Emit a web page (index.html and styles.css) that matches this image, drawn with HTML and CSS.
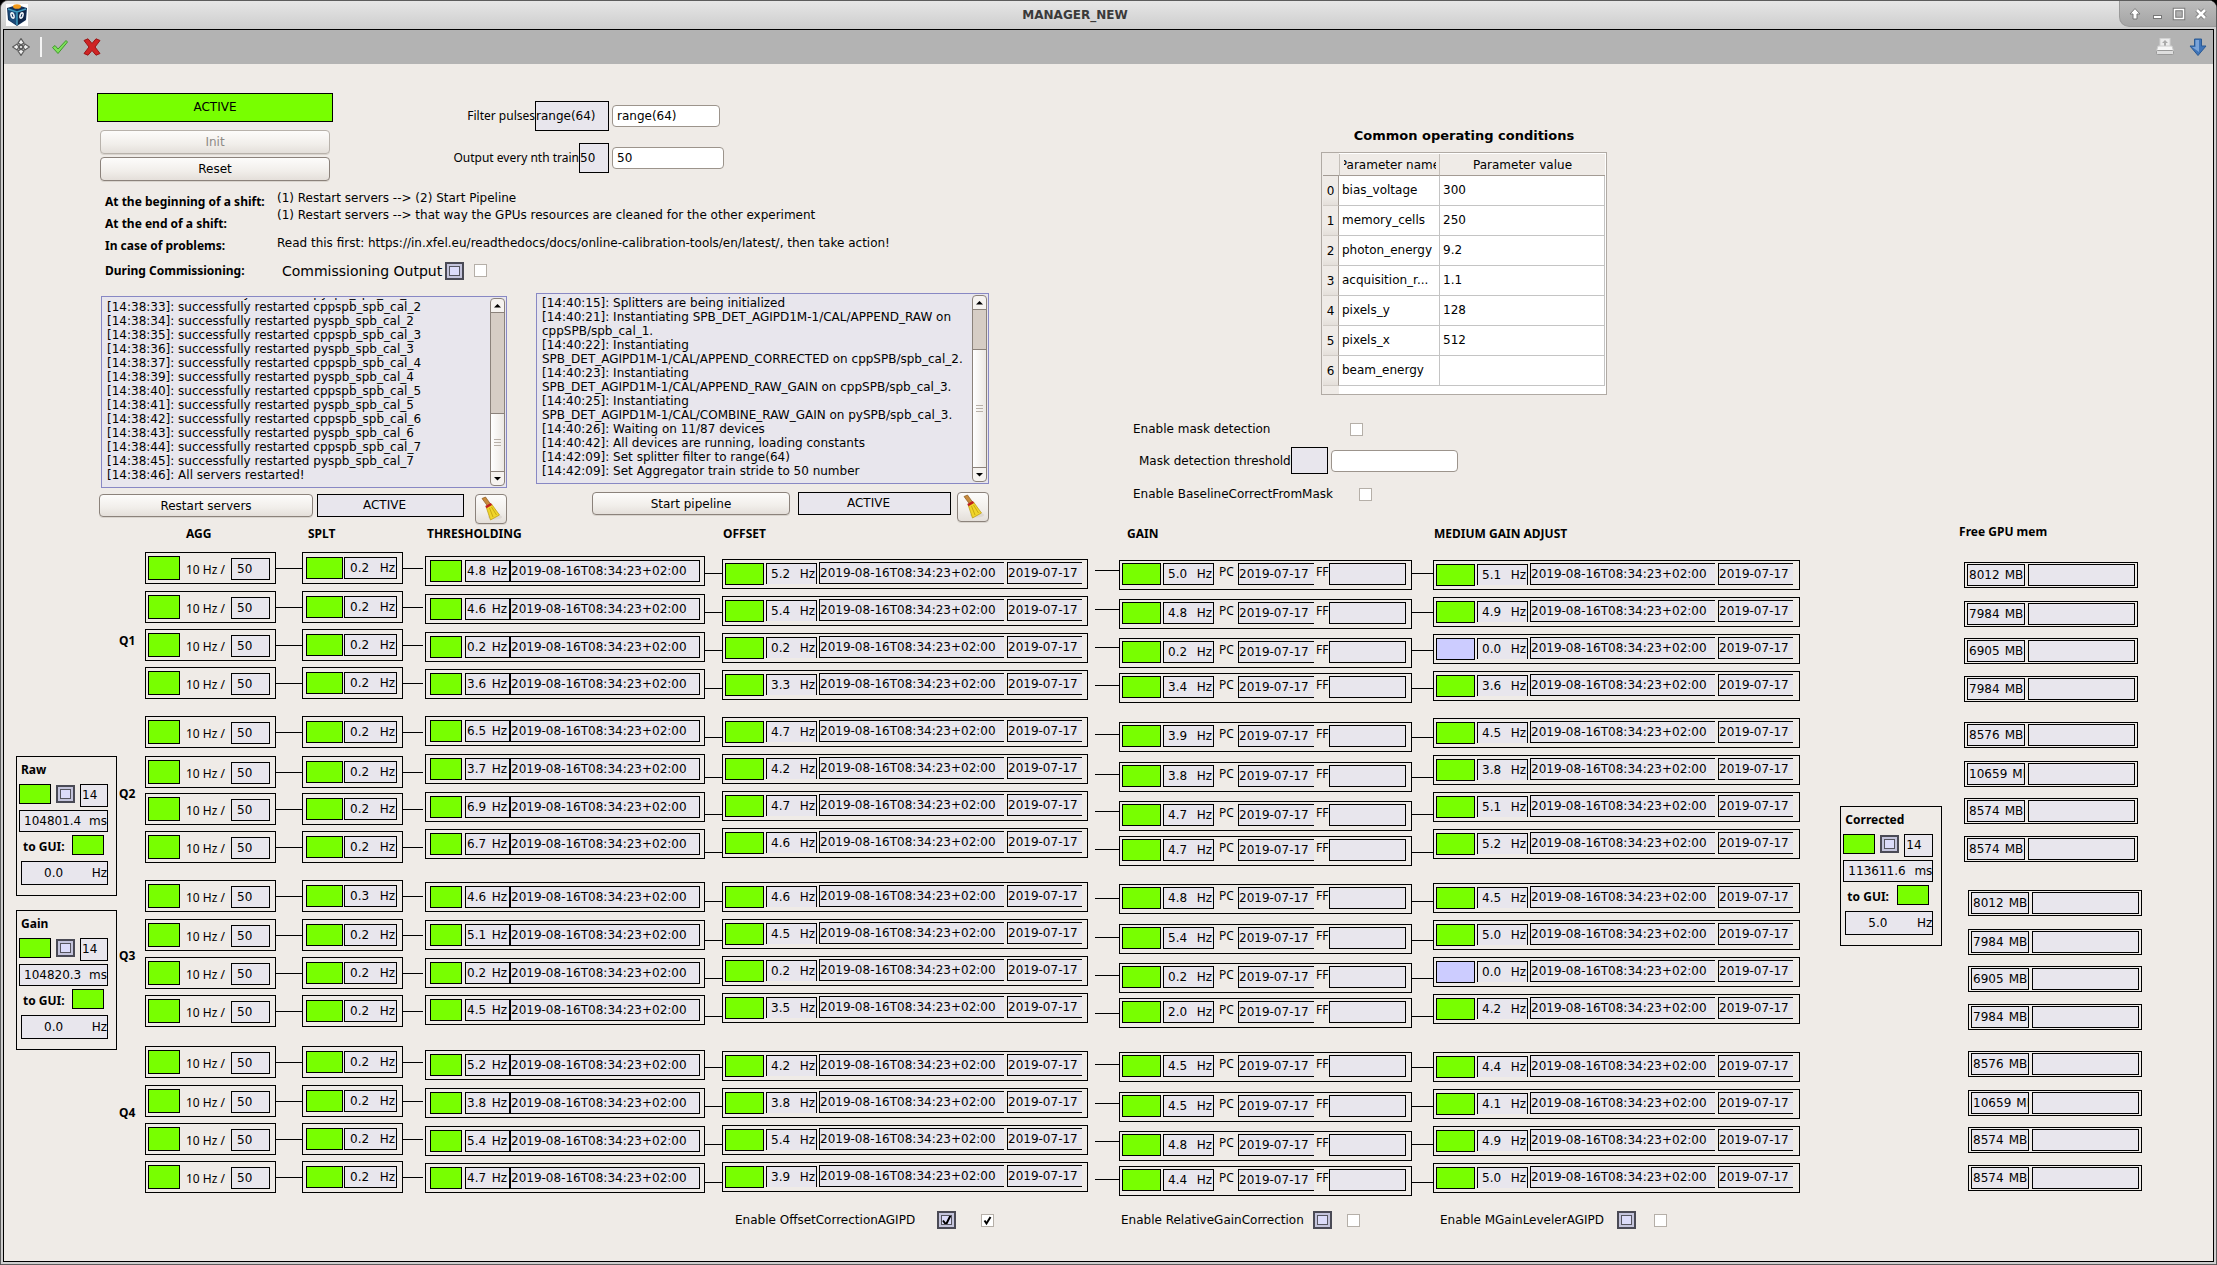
FILE: index.html
```html
<!DOCTYPE html>
<html lang="en">
<head>
<meta charset="utf-8">
<title>MANAGER_NEW</title>
<link rel="stylesheet" href="styles.css">
</head>
<body>
<div class="window">
  <header class="titlebar">
    <svg class="app-icon" width="22" height="22" viewBox="0 0 22 22" aria-hidden="true">
      <rect width="22" height="22" fill="#fff"/>
      <path d="M1 4 11 1l10 3-1 12-9 6-9-6z" fill="#12325a"/>
      <path d="M2 5l9 3v13l-8-5z" fill="#1c4a78"/>
      <path d="M20 5l-9 3v13l8-5z" fill="#0f2547"/>
      <path d="M2 5l9 3 9-3M11 8v13" fill="none" stroke="#3f9cc0" stroke-width="1.5"/>
      <ellipse cx="6.500" cy="11.500" rx="2.200" ry="3.600" fill="#e8eef4" transform="rotate(-15 6.500 11.500)"/>
      <ellipse cx="15.500" cy="11.500" rx="2.200" ry="3.600" fill="#e8eef4" transform="rotate(15 15.500 11.500)"/>
      <path d="M6 10l1 3M16 10l-1 3" stroke="#12325a"/>
      <ellipse cx="11" cy="2.500" rx="4" ry="2.300" fill="#f29a1c"/>
    </svg>
    <h1 class="title">MANAGER_NEW</h1>
    <div class="window-buttons">
      <button type="button" aria-label="Shade"><svg width="14" height="14" viewBox="0 0 14 14"><path d="M7 1.500 12 7H9v5H5V7H2z" fill="#fff" stroke="#777"/></svg></button>
      <button type="button" aria-label="Minimize"><svg width="14" height="14" viewBox="0 0 14 14"><rect x="3.500" y="8.500" width="8" height="3" fill="#fff" stroke="#777"/></svg></button>
      <button type="button" aria-label="Maximize"><svg width="14" height="14" viewBox="0 0 14 14"><path d="M2.500 2.500h9v9h-9z" fill="none" stroke="#777" stroke-width="3.500"/><path d="M2.500 2.500h9v9h-9z" fill="none" stroke="#fff" stroke-width="1.500"/></svg></button>
      <button type="button" aria-label="Close"><svg width="14" height="14" viewBox="0 0 14 14"><path d="M3 3l8 8M11 3l-8 8" stroke="#777" stroke-width="4.500"/><path d="M3 3l8 8M11 3l-8 8" stroke="#fff" stroke-width="2.600"/></svg></button>
    </div>
  </header>
  <div class="frame">
    <nav class="toolbar">
      <button type="button" aria-label="Move"><svg width="18" height="18" viewBox="0 0 18 18"><g fill="#f0f0f0" stroke="#5c5c5c" stroke-width="1.200"><path d="M9 .6 12 5 9 6.800 6 5z"/><path d="M9 17.400 12 13 9 11.200 6 13z"/><path d="M.6 9 5 6 6.800 9 5 12z"/><path d="M17.400 9 13 6 11.200 9 13 12z"/><rect x="7.500" y="7.500" width="3" height="3"/></g></svg></button>
      <span class="separator"></span>
      <button type="button" aria-label="Apply all"><svg width="18" height="16" viewBox="0 0 18 16"><path d="M1.500 8.500 4 6.500 7 10 15 1.500 16.500 3 7 14.500z" fill="#7fe05a" stroke="#3f9a2a"/></svg></button>
      <button type="button" class="discard" aria-label="Discard all"><svg width="18" height="18" viewBox="0 0 18 18"><path d="M1 2.500 5 .8 9 5.500 13 .8 17 2.500 12 9l5 6.500-4 1.700-4-4.700-4 4.700-4-1.700L6 9z" fill="#cf2424" stroke="#9c1414"/></svg></button>
      <button type="button" class="push" aria-label="Print"><svg width="18" height="18" viewBox="0 0 18 18"><rect x="4" y=".5" width="10" height="9" fill="#ececec" stroke="#d2d2d2"/><path d="M9 2l3 3h-2v3H8V5H6z" fill="#aaa"/><path d="M2 8h14l1.500 5H.5z" fill="#f6f6f6" stroke="#ccc"/><rect x=".5" y="12.500" width="17" height="4" rx="1" fill="#dedede" stroke="#999"/></svg></button>
      <button type="button" aria-label="Download"><svg width="18" height="18" viewBox="0 0 18 18"><path d="M5.500 1h7v7H17l-8 9.500L1 8h4.500z" fill="#3f74b8" stroke="#2b5a94"/><path d="M6.500 2H10v12L3 9h3.500z" fill="#7ba4d8"/></svg></button>
    </nav>
    <main class="scene">
      <section class="top">
        <div class="operate">
          <div class="controls">
            <div class="state-stack">
              <div class="readout state on">ACTIVE</div>
              <button type="button" class="btn" disabled>Init</button>
              <button type="button" class="btn">Reset</button>
            </div>
            <div class="filters">
              <div class="filter">
                <label class="note" for="pulses">Filter pulses</label>
                <div class="readout value-wide">range(64)</div>
                <input id="pulses" class="field" type="text" value="range(64)">
              </div>
              <div class="filter">
                <label class="note" for="stride">Output every nth train</label>
                <div class="readout value-slim">50</div>
                <input id="stride" class="field long" type="text" value="50">
              </div>
            </div>
          </div>
          <div class="guide">
            <div class="guide-labels">
              <p>At the beginning of a shift:</p>
              <p>At the end of a shift:</p>
              <p>In case of problems:</p>
            </div>
            <div class="guide-texts">
              <p>(1) Restart servers --&gt; (2) Start Pipeline</p>
              <p>(1) Restart servers --&gt; that way the GPUs resources are cleaned for the other experiment</p>
              <p class="problems">Read this first: https://in.xfel.eu/readthedocs/docs/online-calibration-tools/en/latest/, then take action!</p>
            </div>
          </div>
          <div class="commissioning">
            <span class="caption">During Commissioning:</span>
            <label class="big" for="comm">Commissioning Output</label>
            <input type="checkbox" class="lamp" disabled aria-label="Commissioning Output state">
            <input type="checkbox" class="tick" id="comm">
          </div>
          <div class="consoles">
            <div class="console servers">
              <div class="log">
                <div class="log-text">[14:38:31]: successfully restarted pyspb_spb_cal_1
[14:38:33]: successfully restarted cppspb_spb_cal_2
[14:38:34]: successfully restarted pyspb_spb_cal_2
[14:38:35]: successfully restarted cppspb_spb_cal_3
[14:38:36]: successfully restarted pyspb_spb_cal_3
[14:38:37]: successfully restarted cppspb_spb_cal_4
[14:38:39]: successfully restarted pyspb_spb_cal_4
[14:38:40]: successfully restarted cppspb_spb_cal_5
[14:38:41]: successfully restarted pyspb_spb_cal_5
[14:38:42]: successfully restarted cppspb_spb_cal_6
[14:38:43]: successfully restarted pyspb_spb_cal_6
[14:38:44]: successfully restarted cppspb_spb_cal_7
[14:38:45]: successfully restarted pyspb_spb_cal_7
[14:38:46]: All servers restarted!</div>
                <div class="scroll">
                  <svg class="arrow" viewBox="0 0 13 13" aria-hidden="true"><path d="M3 8.500h7L6.500 5z"/></svg>
                  <span class="trough"></span>
                  <span class="thumb"><i></i></span>
                  <svg class="arrow" viewBox="0 0 13 13" aria-hidden="true"><path d="M3 5h7L6.500 8.500z"/></svg>
                </div>
              </div>
              <div class="console-foot">
                <button type="button" class="btn">Restart servers</button>
                <div class="readout state">ACTIVE</div>
                <button type="button" class="btn broom" aria-label="Clear server log"><svg width="24" height="26" viewBox="0 0 24 26"><ellipse cx="16" cy="21" rx="7" ry="2.500" fill="#ddd8d2"/><path d="M3 2.500 6.500 1 11.500 8 8.500 10z" fill="#c98a3c" stroke="#8a5a1e" stroke-width=".7"/><path d="M7 10.500 12.500 8l8 11-9 5z" fill="#f0d52a" stroke="#b8960c" stroke-width=".7"/><path d="M10.500 12l3.500 9M12.500 11l5 8" stroke="#c9a812"/><path d="M6.300 10 11.800 7l1.300 2-5.600 3.200z" fill="#c02020"/></svg></button>
              </div>
            </div>
            <div class="console pipeline-log">
              <div class="log">
                <div class="log-text">[14:40:15]: Splitters are being initialized
[14:40:21]: Instantiating SPB_DET_AGIPD1M-1/CAL/APPEND_RAW on
cppSPB/spb_cal_1.
[14:40:22]: Instantiating
SPB_DET_AGIPD1M-1/CAL/APPEND_CORRECTED on cppSPB/spb_cal_2.
[14:40:23]: Instantiating
SPB_DET_AGIPD1M-1/CAL/APPEND_RAW_GAIN on cppSPB/spb_cal_3.
[14:40:25]: Instantiating
SPB_DET_AGIPD1M-1/CAL/COMBINE_RAW_GAIN on pySPB/spb_cal_3.
[14:40:26]: Waiting on 11/87 devices
[14:40:42]: All devices are running, loading constants
[14:42:09]: Set splitter filter to range(64)
[14:42:09]: Set Aggregator train stride to 50 number</div>
                <div class="scroll">
                  <svg class="arrow" viewBox="0 0 13 13" aria-hidden="true"><path d="M3 8.500h7L6.500 5z"/></svg>
                  <span class="trough"></span>
                  <span class="thumb"><i></i></span>
                  <svg class="arrow" viewBox="0 0 13 13" aria-hidden="true"><path d="M3 5h7L6.500 8.500z"/></svg>
                </div>
              </div>
              <div class="console-foot">
                <button type="button" class="btn">Start pipeline</button>
                <div class="readout state">ACTIVE</div>
                <button type="button" class="btn broom" aria-label="Clear pipeline log"><svg width="24" height="26" viewBox="0 0 24 26"><ellipse cx="16" cy="21" rx="7" ry="2.500" fill="#ddd8d2"/><path d="M3 2.500 6.500 1 11.500 8 8.500 10z" fill="#c98a3c" stroke="#8a5a1e" stroke-width=".7"/><path d="M7 10.500 12.500 8l8 11-9 5z" fill="#f0d52a" stroke="#b8960c" stroke-width=".7"/><path d="M10.500 12l3.500 9M12.500 11l5 8" stroke="#c9a812"/><path d="M6.300 10 11.800 7l1.300 2-5.600 3.200z" fill="#c02020"/></svg></button>
              </div>
            </div>
          </div>
        </div>
        <div class="conditions">
          <div class="table-block">
            <h2>Common operating conditions</h2>
            <div class="table-frame">
              <table>
                <thead><tr><th class="idx"></th><th class="name"><span>Parameter name</span></th><th class="val">Parameter value</th></tr></thead>
                <tbody>
                  <tr><th>0</th><td>bias_voltage</td><td>300</td></tr>
                  <tr><th>1</th><td>memory_cells</td><td>250</td></tr>
                  <tr><th>2</th><td>photon_energy</td><td>9.2</td></tr>
                  <tr><th>3</th><td>acquisition_r...</td><td>1.1</td></tr>
                  <tr><th>4</th><td>pixels_y</td><td>128</td></tr>
                  <tr><th>5</th><td>pixels_x</td><td>512</td></tr>
                  <tr><th>6</th><td>beam_energy</td><td></td></tr>
                </tbody>
              </table>
            </div>
          </div>
          <div class="mask-row detection"><label for="mask">Enable mask detection</label><input type="checkbox" class="tick" id="mask"></div>
          <div class="mask-row threshold"><label for="maskth">Mask detection threshold</label><div class="readout"></div><input id="maskth" class="field" type="text"></div>
          <div class="mask-row baseline"><label for="base">Enable BaselineCorrectFromMask</label><input type="checkbox" class="tick" id="base"></div>
        </div>
      </section>

      <section class="pipeline">
        <div class="sources">
          <article class="bridge">
            <h3>Raw</h3>
            <div class="bridge-line"><span class="led"></span><input type="checkbox" class="lamp" disabled aria-label="Raw state"><div class="readout count">14</div></div>
            <div class="readout pair"><span>104801.4</span><span>ms</span></div>
            <div class="gui-line"><b>to GUI:</b><span class="led"></span></div>
            <div class="readout pair rate"><span>0.0</span><span>Hz</span></div>
          </article>
          <article class="bridge">
            <h3>Gain</h3>
            <div class="bridge-line"><span class="led"></span><input type="checkbox" class="lamp" disabled aria-label="Gain state"><div class="readout count">14</div></div>
            <div class="readout pair"><span>104820.3</span><span>ms</span></div>
            <div class="gui-line"><b>to GUI:</b><span class="led"></span></div>
            <div class="readout pair rate"><span>0.0</span><span>Hz</span></div>
          </article>
        </div>
        <div class="quadrants"><b>Q1</b><b>Q2</b><b>Q3</b><b>Q4</b></div>
        <div class="lane agg"><h2>AGG</h2><div class="cells" data-lane="agg"></div></div>
        <div class="wires w1" data-lane="wire"></div>
        <div class="lane splt"><h2>SPLT</h2><div class="cells" data-lane="splt"></div></div>
        <div class="wires w2" data-lane="wire"></div>
        <div class="lane thr"><h2>THRESHOLDING</h2><div class="cells" data-lane="thr"></div></div>
        <div class="wires w3" data-lane="wire"></div>
        <div class="lane off"><h2>OFFSET</h2><div class="cells" data-lane="off"></div></div>
        <div class="wires w4" data-lane="wire"></div>
        <div class="lane gain"><h2>GAIN</h2><div class="cells" data-lane="gain"></div></div>
        <div class="wires w5" data-lane="wire"></div>
        <div class="lane off mga"><h2>MEDIUM GAIN ADJUST</h2><div class="cells" data-lane="mga"></div></div>
        <article class="bridge corrected">
          <h3>Corrected</h3>
          <div class="bridge-line"><span class="led"></span><input type="checkbox" class="lamp" disabled aria-label="Corrected state"><div class="readout count">14</div></div>
          <div class="readout pair"><span>113611.6</span><span>ms</span></div>
          <div class="gui-line"><b>to GUI:</b><span class="led"></span></div>
          <div class="readout pair rate"><span>5.0</span><span>Hz</span></div>
        </article>
        <div class="lane gpu"><h2>Free GPU mem</h2><div class="cells" data-lane="gpu"></div></div>
      </section>

      <footer class="switches">
        <div class="switch offset-switch"><label for="sw1">Enable OffsetCorrectionAGIPD</label><input type="checkbox" class="lamp" checked disabled aria-label="Offset correction state"><input type="checkbox" class="tick" id="sw1" checked></div>
        <div class="switch gain-switch"><label for="sw2">Enable RelativeGainCorrection</label><input type="checkbox" class="lamp" disabled aria-label="Relative gain state"><input type="checkbox" class="tick" id="sw2"></div>
        <div class="switch mga-switch"><label for="sw3">Enable MGainLevelerAGIPD</label><input type="checkbox" class="lamp" disabled aria-label="Leveler state"><input type="checkbox" class="tick" id="sw3"></div>
      </footer>
    </main>
  </div>
</div>
<script src="pipeline.js"></script>
</body>
</html>
```
FILE: pipeline.js
```js
// Rates and memory readings of the sixteen modules, top to bottom.
const rates = {
  splt: ["0.2","0.2","0.2","0.2","0.2","0.2","0.2","0.2","0.3","0.2","0.2","0.2","0.2","0.2","0.2","0.2"],
  thr: ["4.8","4.6","0.2","3.6","6.5","3.7","6.9","6.7","4.6","5.1","0.2","4.5","5.2","3.8","5.4","4.7"],
  off: ["5.2","5.4","0.2","3.3","4.7","4.2","4.7","4.6","4.6","4.5","0.2","3.5","4.2","3.8","5.4","3.9"],
  gain: ["5.0","4.8","0.2","3.4","3.9","3.8","4.7","4.7","4.8","5.4","0.2","2.0","4.5","4.5","4.8","4.4"],
  mga: ["5.1","4.9","0.0","3.6","4.5","3.8","5.1","5.2","4.5","5.0","0.0","4.2","4.4","4.1","4.9","5.0"],
  gpu: ["8012","7984","6905","7984","8576","10659","8574","8574","8012","7984","6905","7984","8576","10659","8574","8574"]
};
const STAMP = "2019-08-16T08:34:23+02:00";
const DAY = "2019-07-17";
const led = idle => `<span class="led${idle ? " idle" : ""}"></span>`;
const pair = (value, unit) => `<div class="readout pair"><span>${value}</span><span>${unit}</span></div>`;

const cell = {
  agg: () => `${led()}<span class="note">10 Hz /</span><div class="readout fifty">50</div>`,
  splt: v => led() + pair(v, "Hz"),
  thr: v => led() + pair(v, "Hz") + `<div class="readout stamp">${STAMP}</div>`,
  off: v => led() + pair(v, "Hz") + `<div class="readout stamp">${STAMP}</div><div class="readout day">${DAY}</div>`,
  mga: v => led(v === "0.0") + pair(v, "Hz") + `<div class="readout stamp">${STAMP}</div><div class="readout day">${DAY}</div>`,
  gain: v => led() + pair(v, "Hz") + `<span class="note pc">PC</span><div class="readout day">${DAY}</div><span class="note ff">FF</span><div class="readout flat"></div>`,
  gpu: v => pair(v, "MB") + `<div class="readout bar"></div>`
};

document.querySelectorAll("[data-lane]").forEach(host => {
  const lane = host.dataset.lane;
  for (let i = 0; i < 16; i++) {
    const item = document.createElement("div");
    if (lane === "wire") {
      item.className = "wire";
    } else {
      item.className = "cell";
      item.innerHTML = cell[lane](rates[lane] ? rates[lane][i] : "");
    }
    host.append(item);
  }
});
```
FILE: styles.css
```css
* { box-sizing: border-box; }
body {
  margin: 0;
  background: #000;
  color: #000;
  font: 12px/14px "DejaVu Sans", sans-serif;
}
p, h1, h2, h3 { margin: 0; font-size: 12px; }
button { font: inherit; color: inherit; }

/* Window chrome */
.window {
  display: flex;
  flex-direction: column;
  min-height: 100vh;
  padding: 0 2px 2px;
  border: 1px solid #5c5c5c;
  border-radius: 8px 8px 0 0;
  background: #cfcfcf;
}
.titlebar {
  display: flex;
  align-items: center;
  height: 28px;
  margin: 0 -2px;
  padding-left: 5px;
  border-radius: 7px 7px 0 0;
  background: linear-gradient(#e6e6e6, #cdcdcd);
}
.title {
  flex: 1;
  padding-left: 3px;
  text-align: center;
  line-height: 18px;
  color: #3a3a3a;
}
.window-buttons {
  display: flex;
  align-self: flex-start;
  gap: 8px;
  height: 26px;
  padding: 6px 8px 6px 8px;
  border: 1px solid #9a9a9a;
  border-width: 0 0 1px 1px;
  border-radius: 0 7px 0 10px;
  background: linear-gradient(#bdbdbd, #a4a4a4);
}
.window-buttons button, .toolbar button {
  display: grid;
  place-items: center;
  padding: 0;
  border: 0;
  background: none;
}
.window-buttons button { width: 14px; height: 14px; }
.frame {
  flex: 1;
  display: flex;
  flex-direction: column;
  border: 1px solid #000;
  background: #efebe7;
}
.toolbar {
  display: flex;
  align-items: center;
  height: 34px;
  padding: 0 6px 0 8px;
  background: #b3b3b3;
}
.separator { width: 2px; height: 20px; margin: 0 9px 0 10px; background: #f4f4f4; }
.discard { margin-left: 14px; }
.toolbar .push { margin: 0 15px 0 auto; }

/* Shared widgets */
.readout {
  border: 1px solid #000;
  background: #e8e6ed;
  white-space: nowrap;
  overflow: hidden;
}
.state { text-align: center; }
.led { background: #78ff00; border: 1px solid #000; flex: none; }
.on { background: #78ff00; }
.idle { background: #ccccff; }
.note, .caption, .guide-labels, .quadrants, .lane h2, .bridge h3, .gui-line b {
  font-family: "Noto Sans", sans-serif;
}
.btn {
  height: 24px;
  padding: 0;
  border: 1px solid #8b827b;
  border-radius: 4px;
  background: linear-gradient(#fdfcfb, #f1eeea 60%, #e4dfda);
  box-shadow: 0 1px 0 #d9d4ce;
}
.btn:disabled { color: #8e8a86; border-color: #b8b2ab; }
.field {
  height: 22px;
  padding: 0 4px;
  border: 1px solid #9c948c;
  border-radius: 4px;
  background: #fff;
  font: inherit;
}
.tick, .lamp { appearance: none; margin: 0; background: #fff; }
.tick { width: 13px; height: 13px; border: 1px solid #b5afa8; }
.tick:checked {
  background: #fff url("data:image/svg+xml,%3Csvg xmlns='http://www.w3.org/2000/svg' viewBox='0 0 11 11'%3E%3Cpath d='M2.500 5.500 4.500 8.500 8.500 2' fill='none' stroke='%23000' stroke-width='2'/%3E%3C/svg%3E") center / 11px no-repeat;
}
.lamp {
  width: 19px;
  height: 18px;
  border: 2px solid #4a4a55;
  background: #dcdcfa;
  box-shadow: inset 0 0 0 2px #c4c4dc, inset 0 0 0 3px #55555f;
}
.lamp:checked {
  background: #dcdcfa url("data:image/svg+xml,%3Csvg xmlns='http://www.w3.org/2000/svg' viewBox='0 0 15 14'%3E%3Cpath d='M4 7.500 7 11.500 12 1.500' fill='none' stroke='%23000' stroke-width='2'/%3E%3C/svg%3E") center / 15px 14px no-repeat;
}

/* Upper half */
.top { display: flex; height: max-content; }
.operate { width: 897px; margin-left: 93px; padding-top: 29px; }
.controls { display: flex; gap: 120px; }
.state-stack { display: flex; flex-direction: column; width: 236px; }
.state-stack .state { height: 29px; line-height: 26px; margin-bottom: 8px; }
.state-stack .btn { margin: 0 3px 3px; }
.filters { display: flex; flex-direction: column; gap: 12px; padding-top: 8px; }
.filter { display: grid; grid-template-columns: 1fr auto 115px; align-items: center; width: 271px; }
.filter .note { text-align: right; white-space: nowrap; }
.filter .readout { height: 30px; line-height: 28px; }
.value-wide { width: 74px; }
.value-slim { width: 30px; }
.filter .field { width: 108px; margin-left: 3px; }
.filter .long { width: 112px; }
.guide { display: flex; padding-left: 8px; margin-top: 6px; }
.guide-labels { width: 172px; padding-top: 1px; font-weight: bold; line-height: 22px; }
.guide-texts { line-height: 17px; white-space: nowrap; }
.problems { margin-top: 11px; }
.commissioning { display: flex; align-items: center; height: 27px; padding-left: 8px; }
.caption { width: 177px; font-weight: bold; }
.big { width: 163px; font-size: 14px; white-space: nowrap; }
.commissioning .tick { margin-left: 10px; }

.consoles { display: flex; gap: 29px; align-items: flex-start; padding-left: 2px; margin-top: 9px; }
.console { display: flex; flex-direction: column; }
.servers { width: 408px; padding-top: 3px; gap: 6px; }
.pipeline-log { width: 453px; gap: 8px; }
.log {
  display: flex;
  justify-content: space-between;
  height: 192px;
  padding: 1px 1px 1px 5px;
  border: 1px solid #8888c4;
  background: #e8e6ed;
}
.servers .log { margin-left: 2px; }
.pipeline-log .log { height: 191px; }
.log-text {
  display: flex;
  flex-direction: column;
  justify-content: flex-end;
  padding-bottom: 4px;
  overflow: hidden;
  white-space: pre;
}
.scroll {
  display: flex;
  flex-direction: column;
  width: 15px;
  border: 1px solid #8b827b;
  border-radius: 4px;
  background: #f6f3f0;
}
.arrow { width: 13px; height: 13px; }
.trough { flex: 102; background: #d6cdc5; border: 1px solid #8b827b; border-width: 1px 0; }
.thumb { flex: 58; display: grid; place-items: center; background: linear-gradient(90deg, #fff, #ece8e3); border-bottom: 1px solid #8b827b; }
.pipeline-log .trough { flex: 39; }
.pipeline-log .thumb { flex: 119; }
.thumb i { width: 7px; height: 7px; background: repeating-linear-gradient(#b8b0a8 0 1px, transparent 1px 3px); }
.console-foot { display: flex; align-items: flex-start; }
.console-foot .btn { width: 214px; height: 23px; margin-right: 4px; }
.console-foot .state { width: 147px; height: 23px; line-height: 21px; padding-right: 12px; margin-right: 11px; }
.pipeline-log .console-foot { padding-left: 56px; }
.pipeline-log .console-foot .btn { width: 198px; margin-right: 8px; }
.pipeline-log .console-foot .state { width: 153px; margin-right: 6px; }
.console-foot .broom, .pipeline-log .console-foot .broom {
  display: grid;
  place-items: center;
  width: 32px;
  height: 30px;
  margin: 0;
}

.conditions { padding: 63px 0 0 139px; }
.table-block { width: 286px; margin-left: 188px; }
.table-block h2 { font-size: 13px; line-height: 18px; margin-bottom: 7px; text-align: center; }
.table-frame { height: 243px; padding: 1px; border: 1px solid #b0aaa4; background: linear-gradient(90deg, #efebe7 17px, #fff 17px); }
table { width: 100%; border-collapse: separate; border-spacing: 0; table-layout: fixed; }
th, td { padding: 0; font-weight: normal; }
thead th { height: 22px; background: #efebe7; border-bottom: 1px solid #a39b94; }
.idx { width: 16px; }
.name { width: 101px; padding: 0 3px 0 4px; border-right: 1px solid #c4bfb9; border-left: 1px solid #c4bfb9; }
.name span { display: flex; justify-content: center; overflow: hidden; white-space: nowrap; }
tbody th { height: 30px; background: linear-gradient(#efebe7 70%, #e4dfda); border-right: 1px solid #a39b94; border-bottom: 1px solid #d0cbc5; }
td { padding: 0 0 2px 3px; background: #fff; border-right: 1px solid #c4c4c4; border-bottom: 1px solid #c4c4c4; white-space: nowrap; }
.mask-row { display: flex; align-items: center; }
.detection { height: 16px; margin-top: 26px; }
.detection label { width: 217px; }
.threshold { height: 27px; margin-top: 10px; padding-left: 6px; }
.threshold label { width: 152px; white-space: nowrap; }
.threshold .readout { width: 37px; height: 27px; margin-right: 3px; }
.threshold .field { width: 127px; }
.baseline { height: 16px; margin-top: 12px; }
.baseline label { width: 226px; }

/* Module pipeline: one lane per processing stage */
.pipeline {
  display: grid;
  grid-template-columns: 101px 28px 131px 26px 101px 22px 280px 17px 366px 31px 293px 21px 367px 41fr 102px 17fr 183px 72fr;
  align-items: start;
  padding: 1px 0 0 12px;
}
.lane h2 { line-height: 18px; white-space: nowrap; }
.cells, .wires { display: grid; align-items: start; }
.cell { display: flex; border: 1px solid #000; height: 30px; }
.wire { height: 1px; background: #000; }
.cell .led, .cell .readout { height: 22px; line-height: 20px; }
.pair { display: flex; justify-content: space-between; }

.agg .cells, .splt .cells { margin-top: 9px; grid-template-rows: 39px 38px 38px 49px 40px 37px 38px 49px 39px 38px 38px 51px 39px 38px 38px 32px; }
.wires { grid-template-rows: 39px 38px 38px 49px 40px 37px 38px 49px 39px 38px 38px 51px 39px 38px 38px 1px; }
.w1, .w2 { padding-top: 43px; }
.w3, .w5 { padding-top: 48px; }
.w4 { padding: 45px 0 0 7px; }
.w2 { padding-right: 2px; }

.agg h2 { padding-left: 41px; }
.agg .cell { height: 32px; padding: 3px 5px 0 2px; }
.agg .led { width: 32px; height: 24px; margin-right: 6px; }
.agg .note { flex: 1; line-height: 28px; }
.agg .fifty { width: 39px; margin-top: 2px; padding-left: 5px; }

.splt h2 { padding-left: 6px; }
.splt .cell { height: 32px; padding: 4px 3px 0; }
.splt .led { width: 37px; margin-right: 1px; }
.splt .pair { width: 53px; padding: 0 1px 0 5px; }

.thr .cells { margin-top: 13px; grid-template-rows: 38px 38px 37px 47px 38px 38px 37px 53px 38px 38px 37px 55px 38px 38px 37px 30px; }
.thr h2 { padding-left: 2px; }
.thr .cell { padding: 3px 4px; }
.thr .led { width: 32px; margin-right: 3px; }
.thr .pair { width: 45px; padding: 0 2px 0 1px; }
.thr .stamp { flex: 1; }

.off .cells { margin-top: 16px; grid-template-rows: 37px 37px 37px 47px 37px 37px 37px 54px 37px 37px 37px 58px 37px 37px 37px 30px; }
.off h2 { padding-left: 1px; }
.off .cell { padding: 2px 5px 0 2px; }
.off .led { width: 39px; margin: 1px 2px 0 0; }
.off .pair { width: 51px; height: 21px; margin: 1px 2px 0 0; padding: 0 1px 0 4px; border-bottom: 0; }
.off .stamp { width: 185px; margin-right: 3px; border-right: 0; }
.off .day { width: 75px; border-right: 0; }

.gain .cells { margin-top: 17px; grid-template-rows: 39px 39px 35px 49px 40px 39px 35px 48px 40px 39px 35px 54px 40px 39px 35px 30px; }
.gain h2 { padding-left: 8px; }
.gain .cell { padding: 2px 5px 0 2px; }
.gain .led { width: 39px; margin-right: 2px; }
.gain .pair { width: 51px; padding: 0 1px 0 4px; }
.gain .pc { width: 24px; padding-left: 5px; line-height: 18px; }
.gain .day { width: 76px; border-right: 0; }
.gain .ff { width: 15px; padding-left: 2px; line-height: 18px; }
.gain .flat { flex: 1; }

.mga .cells { margin-top: 17px; }

.gpu { grid-column: 17; }
.gpu h2 { line-height: 14px; }
.gpu .cells { margin-top: 23px; padding-left: 5px; grid-template-rows: 39px 37px 38px 46px 39px 37px 38px 54px 39px 37px 38px 47px 39px 37px 38px 26px; }
.gpu .cell { width: 174px; height: 26px; padding: 1px 2px; }
.gpu .cell:nth-child(n + 9) { margin-left: 4px; }
.gpu .pair { width: 58px; margin-right: 3px; padding: 0 1px; gap: 5px; }
.gpu .bar { flex: 1; }

.quadrants { display: grid; grid-template-rows: 153px 162px 157px 18px; padding: 107px 0 0 2px; line-height: 18px; }

.sources { display: flex; flex-direction: column; gap: 14px; padding-top: 231px; }
.bridge { height: 140px; padding: 3px 8px 0 2px; border: 1px solid #000; }
.bridge h3 { height: 24px; padding-left: 2px; line-height: 20px; }
.bridge-line { display: flex; height: 26px; }
.bridge .led { width: 32px; height: 20px; }
.bridge-line .lamp { margin: 1px 5px 0; }
.count { flex: 1; height: 23px; line-height: 21px; padding-left: 1px; }
.bridge .pair { height: 22px; line-height: 20px; padding-left: 4px; }
.gui-line { display: flex; justify-content: space-between; height: 29px; padding: 3px 4px 0; }
.gui-line b { line-height: 24px; }
.bridge .rate { height: 24px; line-height: 22px; margin-left: 2px; padding-left: 22px; }
.corrected { grid-column: 15; margin-top: 281px; }

/* Correction switches */
.switches {
  display: grid;
  grid-template-columns: 386px 319px auto;
  justify-content: start;
  padding: 15px 0 20px 731px;
}
.switch { display: flex; align-items: center; }
.offset-switch label { width: 202px; }
.offset-switch .tick { margin-left: 25px; }
.gain-switch label { width: 192px; }
.gain-switch .tick { margin-left: 15px; }
.mga-switch label { width: 177px; }
.mga-switch .tick { margin-left: 18px; }
```
